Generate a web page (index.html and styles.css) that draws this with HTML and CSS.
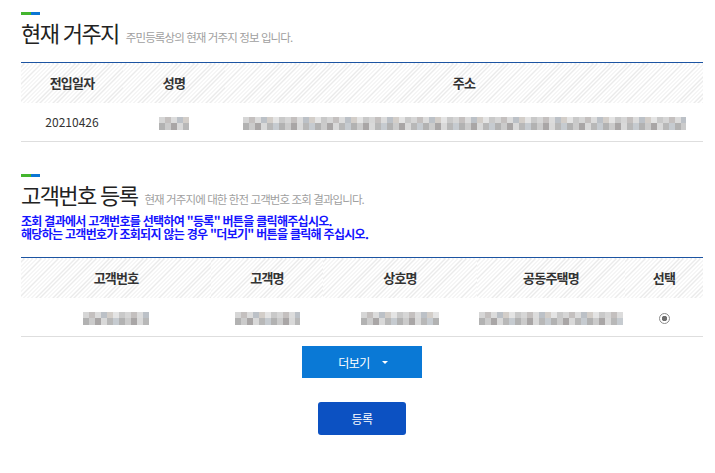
FILE: index.html
```html
<!DOCTYPE html>
<html lang="ko">
<head>
<meta charset="utf-8">
<title>현재 거주지 / 고객번호 등록</title>
<link rel="stylesheet" href="styles.css">
</head>
<body>
<div class="page">
  <section class="sec">
    <div class="bar"><span class="bar-g"></span><span class="bar-b"></span></div>
    <div class="sec-head">
      <h2 class="title">현재 거주지</h2>
      <span class="desc">주민등록상의 현재 거주지 정보 입니다.</span>
    </div>
    <table class="grid grid-addr">
      <colgroup><col class="c-date"><col class="c-name"><col></colgroup>
      <thead>
        <tr><th>전입일자</th><th>성명</th><th>주소</th></tr>
      </thead>
      <tbody>
        <tr>
          <td>20210426</td>
          <td><span class="mosaic m-name"></span></td>
          <td class="left"><span class="mosaic m-addr"></span></td>
        </tr>
      </tbody>
    </table>
  </section>

  <section class="sec sec2">
    <div class="bar"><span class="bar-g"></span><span class="bar-b"></span></div>
    <div class="sec-head">
      <h2 class="title">고객번호 등록</h2>
      <span class="desc">현재 거주지에 대한 한전 고객번호 조회 결과입니다.</span>
    </div>
    <p class="notice">조회 결과에서 고객번호를 선택하여 "등록" 버튼을 클릭해주십시오.<br>해당하는 고객번호가 조회되지 않는 경우 "더보기" 버튼을 클릭해 주십시오.</p>
    <table class="grid grid-cust">
      <colgroup><col class="c1"><col class="c2"><col class="c3"><col class="c4"><col class="c5"></colgroup>
      <thead>
        <tr><th>고객번호</th><th>고객명</th><th>상호명</th><th>공동주택명</th><th>선택</th></tr>
      </thead>
      <tbody>
        <tr>
          <td><span class="mosaic m-no"></span></td>
          <td><span class="mosaic m-cname"></span></td>
          <td><span class="mosaic m-biz"></span></td>
          <td><span class="mosaic m-apt"></span></td>
          <td><span class="radio"></span></td>
        </tr>
      </tbody>
    </table>
    <div class="actions">
      <button class="btn-more" type="button">더보기<span class="caret"></span></button>
      <button class="btn-reg" type="button">등록</button>
    </div>
  </section>
</div>
</body>
</html>
```

FILE: styles.css
```css
* { box-sizing: border-box; }
html, body { margin: 0; padding: 0; background: #fff; }
body {
  font-family: "Noto Sans CJK KR", "Noto Sans", sans-serif;
  color: #333;
}
.page {
  width: 715px;
  padding: 12px 12px 0 21px;
}
.bar { display: flex; width: 19px; height: 3px; }
.bar-g { flex: 1; background: #44b52e; }
.bar-b { flex: 1; background: #0b76d4; }

.sec-head {
  display: flex;
  align-items: baseline;
  margin-top: 4px;
}
.title {
  margin: 0;
  font-size: 22px;
  font-weight: 400;
  line-height: 26px;
  letter-spacing: -1.6px;
  color: #222;
}
.desc {
  margin-left: 7px;
  font-size: 11.5px;
  letter-spacing: -0.9px;
  color: #a0a0a0;
}

.grid {
  width: 682px;
  border-collapse: collapse;
  table-layout: fixed;
  border-top: 1px solid #1c54a2;
  margin-top: 17px;
}
.grid th {
  height: 40px;
  padding: 0;
  font-size: 13px;
  font-weight: 700;
  letter-spacing: -0.8px;
  color: #333;
  text-align: center;
  background: repeating-linear-gradient(135deg, #fff 0 2px, #ebebeb 2px 3px);
}
.grid td {
  height: 39px;
  padding: 0;
  font-size: 12px;
  color: #333;
  text-align: center;
  vertical-align: middle;
  border-bottom: 1px solid #dedede;
}
.grid td.left { text-align: left; padding-left: 18px; }
.c-date, .c-name { width: 102px; }

.c1 { width: 190px; }
.c2 { width: 112px; }
.c3 { width: 154px; }
.c4 { width: 148px; }
.c5 { width: 78px; }

.mosaic {
  display: inline-block;
  height: 13px;
  vertical-align: middle;
  background-image:
    repeating-linear-gradient(90deg, #d6d6d6 0 6px, #c4c0bf 6px 12px, #dcdcdc 12px 18px, #bcc1c7 18px 24px, #d3cec9 24px 30px, #e4e4e4 30px 36px, #c9c9c9 36px 42px),
    repeating-linear-gradient(90deg, #b2b2b2 0 6px, #cbcbcb 6px 12px, #a9a6a6 12px 18px, #d9d9d9 18px 24px, #b8b8b8 24px 30px, #c6cbd0 30px 36px);
  background-size: 100% 6px, 100% 7px;
  background-position: 0 0, 0 6px;
  background-repeat: no-repeat;
}
.m-name { width: 30px; }
.m-addr { width: 443px; }
.m-no { width: 66px; }
.m-cname { width: 65px; }
.m-biz { width: 78px; }
.m-apt { width: 144px; }

.radio {
  display: inline-block;
  width: 11px;
  height: 11px;
  border: 1px solid #8c8c8c;
  border-radius: 50%;
  background: radial-gradient(circle, #6e6e6e 0 2.5px, #fff 3px);
  vertical-align: middle;
}

.sec2 { margin-top: 32px; }
.notice {
  margin: 7px 0 0;
  font-size: 12px;
  font-weight: 700;
  line-height: 13px;
  letter-spacing: -0.7px;
  color: #1414ff;
}
.sec2 .grid { margin-top: 17px; }

.actions {
  display: flex;
  flex-direction: column;
  align-items: center;
  width: 682px;
}
.btn-more {
  margin-top: 9px;
  width: 120px;
  height: 32px;
  border: 0;
  background: #0a79d6;
  color: #fff;
  font-family: inherit;
  font-size: 12px;
  letter-spacing: -0.5px;
  display: flex;
  align-items: center;
  justify-content: center;
  padding: 0 0 0 2px;
}
.caret {
  display: inline-block;
  margin-left: 12px;
  width: 0;
  height: 0;
  border-left: 3px solid transparent;
  border-right: 3px solid transparent;
  border-top: 3px solid #fff;
}
.btn-reg {
  margin-top: 24px;
  width: 88px;
  height: 33px;
  border: 0;
  border-radius: 3px;
  background: #0c51c2;
  color: #fff;
  font-family: inherit;
  font-size: 12px;
  letter-spacing: -0.5px;
}
```
